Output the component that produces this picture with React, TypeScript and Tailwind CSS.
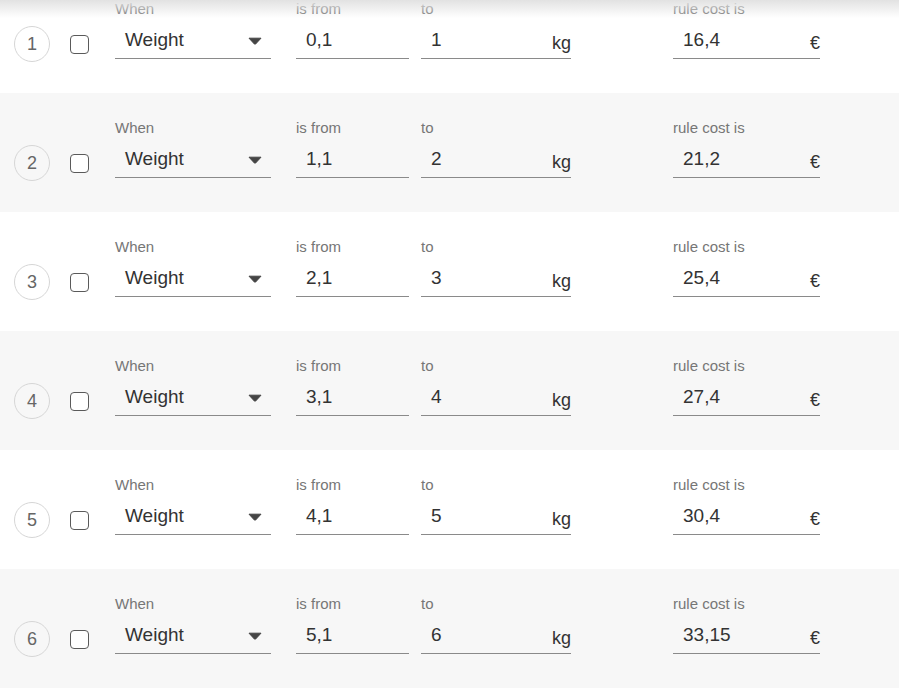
import React from 'react';

type Rule = { from: string; to: string; cost: string };

const rules: Rule[] = [
  { from: '0,1', to: '1', cost: '16,4' },
  { from: '1,1', to: '2', cost: '21,2' },
  { from: '2,1', to: '3', cost: '25,4' },
  { from: '3,1', to: '4', cost: '27,4' },
  { from: '4,1', to: '5', cost: '30,4' },
  { from: '5,1', to: '6', cost: '33,15' },
];

const Field: React.FC<{ label: string; value: string; width: string; unit?: string; select?: boolean; ml: string }> = ({
  label,
  value,
  width,
  unit,
  select,
  ml,
}) => (
  <div className={`${width} ${ml} mt-[26px] flex flex-col`}>
    <div className='text-[15px] leading-[17px] text-[#767676]'>{label}</div>
    <div className='mt-[6px] h-[36px] border-b border-[#8a8a8a] flex items-baseline pl-[10px] pt-[6px]'>
      <span className='text-[19px] leading-[22px] text-[#333] flex-1'>{value}</span>
      {unit && <span className='text-[18px] leading-[22px] text-[#333] translate-y-[3px]'>{unit}</span>}
      {select && (
        <svg width='14' height='8' viewBox='0 0 14 8' className='mr-[9px] self-center -mt-[5px]'>
          <path d='M1 1.2 L13 1.2 L7.6 7 Q7 7.6 6.4 7 Z' fill='#454545' stroke='#454545' strokeLinejoin='round' strokeWidth='1' />
        </svg>
      )}
    </div>
  </div>
);

const Row: React.FC<{ index: number; rule: Rule }> = ({ index, rule }) => (
  <div className={`h-[119px] flex items-start pl-[14px] ${index % 2 === 0 ? 'bg-[#f7f7f7]' : 'bg-white'}`}>
    <div className='mt-[52px] w-[36px] h-[36px] rounded-full border border-[#d6d6d6] flex items-center justify-center text-[18px] text-[#666]'>
      {index}
    </div>
    <div className='mt-[61px] ml-[20px] w-[19px] h-[19px] rounded-[4px] border border-[#5a5a5a] bg-white' />
    <Field label='When' value='Weight' width='w-[156px]' ml='ml-[26px]' select />
    <Field label='is from' value={rule.from} width='w-[113px]' ml='ml-[25px]' />
    <Field label='to' value={rule.to} width='w-[150px]' ml='ml-[12px]' unit='kg' />
    <Field label='rule cost is' value={rule.cost} width='w-[147px]' ml='ml-[102px]' unit='€' />
  </div>
);

const App: React.FC = () => {
  return (
    <div className='relative w-[899px] h-[688px] overflow-hidden bg-white' style={{ fontFamily: '"Liberation Sans", Arial, sans-serif' }}>
      <div className='-mt-[26px]'>
        {rules.map((r, i) => (
          <Row key={i} index={i + 1} rule={r} />
        ))}
      </div>
      <div className='absolute top-0 left-0 right-0 h-[18px] bg-gradient-to-b from-[#e2e2e2] to-transparent pointer-events-none' />
    </div>
  );
};

export default App;
